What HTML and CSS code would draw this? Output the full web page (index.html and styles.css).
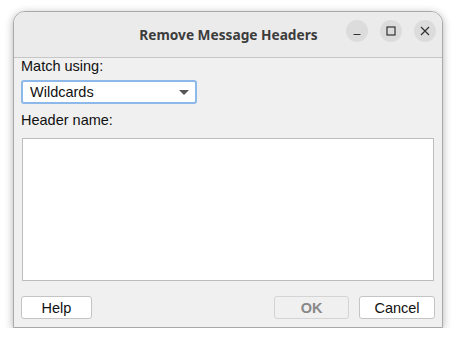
FILE: index.html
```html
<!DOCTYPE html>
<html lang="en">
<head>
  <meta charset="UTF-8" />
  <title>Remove Message Headers</title>
  <link rel="stylesheet" href="styles.css">
</head>
<body>
  <div class="window">
    <div class="titlebar">
      <div class="title">Remove Message Headers</div>
      <div class="controls">
        <span class="ctl"><svg width="10" height="10" viewBox="0 0 10 10"><path d="M1.5 8.5h7" stroke="#333" stroke-width="1.2"/></svg></span>
        <span class="ctl"><svg width="10" height="10" viewBox="0 0 10 10"><rect x="1" y="1" width="8" height="8" fill="none" stroke="#333" stroke-width="1.2"/></svg></span>
        <span class="ctl"><svg width="10" height="10" viewBox="0 0 10 10"><path d="M1 1l8 8M9 1l-8 8" stroke="#333" stroke-width="1.2"/></svg></span>
      </div>
    </div>
    <div class="content">
      <div class="label">Match using:</div>
      <div class="combo">
        <span>Wildcards</span>
        <span class="arrow"></span>
      </div>
      <div class="label second">Header name:</div>
      <div class="textbox"></div>
      <div class="buttons">
        <button class="btn help">Help</button>
        <div class="spacer"></div>
        <button class="btn ok disabled">OK</button>
        <button class="btn cancel">Cancel</button>
      </div>
    </div>
  </div>
</body>
</html>
```
FILE: styles.css
```css
body {
  margin: 0;
  background: #fff;
  font-family: 'Liberation Sans', Arial, sans-serif;
}
.window {
  margin: 11px 0 0 13px;
  width: 428px;
  height: 315px;
  border: 1px solid #a9a9a9;
  border-radius: 12px 12px 0 0;
  background: #f0f0f0;
  box-shadow: 0 2px 8px rgba(0,0,0,0.3);
  display: flex;
  flex-direction: column;
  overflow: hidden;
}
.titlebar {
  height: 45px;
  flex: none;
  background: #ebebeb;
  border-bottom: 1px solid #c6c6c6;
  display: flex;
  align-items: center;
  justify-content: center;
  position: relative;
}
.title {
  font-family: 'Noto Sans', 'DejaVu Sans', sans-serif;
  font-weight: bold;
  font-size: 13.7px;
  color: #3c3c3c;
  padding-left: 1px;
}
.controls {
  position: absolute;
  right: 6px;
  top: 8px;
  display: flex;
  gap: 12px;
}
.ctl {
  width: 22px;
  height: 22px;
  border-radius: 50%;
  background: #dcdcdc;
  display: flex;
  align-items: center;
  justify-content: center;
}
.content {
  flex: 1;
  padding: 0 7px 0 7px;
  display: flex;
  flex-direction: column;
}
.label {
  font-size: 14.5px;
  line-height: 16px;
  color: #111;
}
.label.second {
  margin-top: 8px;
}
.combo {
  margin-top: 6px;
  width: 165px;
  height: 20px;
  border: 2px solid #8cb8ea;
  border-radius: 3px;
  background: #fff;
  display: flex;
  align-items: center;
  justify-content: space-between;
  padding: 0 0 0 7px;
  font-size: 14.5px;
  color: #111;
}
.arrow {
  width: 0;
  height: 0;
  border-left: 5px solid transparent;
  border-right: 5px solid transparent;
  border-top: 5px solid #555;
  margin-right: 6px;
}
.textbox {
  margin: 10px 1px 0 1px;
  height: 141px;
  border: 1px solid #bcbcbc;
  background: #fff;
}
.buttons {
  margin-top: 15px;
  display: flex;
  gap: 10px;
}
.spacer {
  flex: 1;
}
.btn {
  height: 23px;
  border: 1px solid #c4c4c4;
  border-radius: 3px;
  background: #fff;
  font-family: 'Liberation Sans', Arial, sans-serif;
  font-size: 14.5px;
  color: #111;
  padding: 0;
}
.help {
  width: 71px;
}
.ok {
  width: 75px;
}
.cancel {
  width: 76px;
}
.btn.disabled {
  background: #f0f0f0;
  color: #888;
  font-weight: bold;
  border-color: #d4d4d4;
}
```
